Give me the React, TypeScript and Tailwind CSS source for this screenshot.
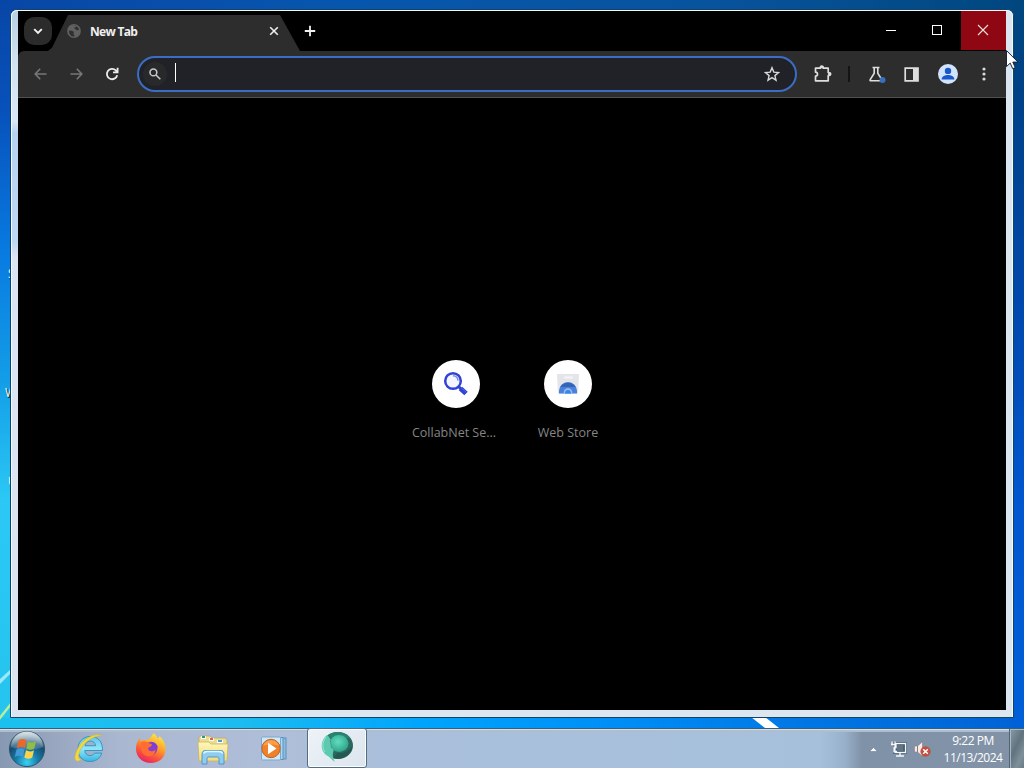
import React from "react";

function TabStrip() {
  return (
    <div className="flex h-10 items-start bg-black">
      <div className="ml-[6px] mt-[6px] flex h-7 w-7 items-center justify-center rounded-[10px] bg-[#2b2b2b]">
        <svg width="10" height="7" viewBox="0 0 10 7" fill="none" stroke="#f2f2f2" strokeWidth="1.9">
          <path d="M1.2 1.2 5 5l3.800-3.800" />
        </svg>
      </div>
      <div className="-ml-1 mt-1 flex h-9 w-[252px] items-center bg-[#2d2d2d] pl-[19px] pr-[21px] [clip-path:polygon(0_100%,4px_91%,20px_0,232px_0,252px_100%)]">
        <svg width="14" height="14" viewBox="0 0 14 14" className="-mt-1">
          <circle cx="7" cy="7" r="6.900" fill="#606060" />
          <path d="M2 6.500c2.300.3 3.700.2 4.600 1.200.8.900-.7 1.800.1 2.700.6.800 1.100 1.500.8 2.200C4.500 12.800 1.600 10.500 2 6.500ZM6 1.500c1.500-.4 3 0 3.300 1-.1 1-1.900.4-2 1.500.1.900 1.300.9 1.900 1.700.7.800 1.800.5 2.700.4C12 4 10 1.400 6 1.500Z" fill="#303030" />
        </svg>
        <span className="-mt-[3px] ml-[9px] flex-1 whitespace-nowrap text-[12px] font-bold tracking-[-0.7px] text-[#f0f0f0]">New Tab</span>
        <svg width="10" height="10" viewBox="0 0 10 10" fill="none" stroke="#eeeeee" strokeWidth="1.600" className="-mt-1">
          <path d="m1.200 1.200 7.600 7.600m0-7.600L1.200 8.800" />
        </svg>
      </div>
      <svg width="12" height="12" viewBox="0 0 12 12" fill="none" stroke="#f0f0f0" strokeWidth="1.800" className="ml-[4px] mt-[14px]">
        <path d="M6 .8v10.400M.8 6h10.400" />
      </svg>
      <div className="ml-auto flex h-full w-[138px]">
        <div className="flex flex-1 items-start justify-center pt-[19px]">
          <span className="h-px w-[10px] bg-white" />
        </div>
        <div className="flex flex-1 items-start justify-center pr-px pt-[14px]">
          <span className="h-[10px] w-[10px] border border-white" />
        </div>
        <div className="flex h-[39px] w-[45px] items-start justify-center bg-[#8f0712] pr-px pt-[13px]">
          <svg width="12" height="12" viewBox="0 0 12 12" fill="none" stroke="#f4dfe1" strokeWidth="1.100">
            <path d="m1 1 10 10M11 1 1 11" />
          </svg>
        </div>
      </div>
    </div>
  );
}

function Toolbar() {
  return (
    <div className="flex h-[47px] items-start rounded-tl-[6px] border-b border-[#505050] bg-[#2d2d2d] pt-[5px]">
      <div className="flex h-9 w-[119px] shrink-0 items-center pl-4">
        <svg width="13" height="12" viewBox="0 0 13 12" fill="none" stroke="#777777" strokeWidth="1.600">
          <path d="M12.500 6H1.300M6.200.8 1.200 6l5 5.200" />
        </svg>
        <svg width="13" height="12" viewBox="0 0 13 12" fill="none" stroke="#777777" strokeWidth="1.600" className="ml-[23px]">
          <path d="M.5 6h11.200M6.800.8l5 5.200-5 5.200" />
        </svg>
        <svg width="14" height="14" viewBox="0 0 14 14" fill="none" stroke="#ededed" strokeWidth="1.800" className="ml-[22px]">
          <path d="M12.200 8.200a5.200 5.200 0 1 1-1.400-4.900L12.400 5M12.600.8v4.600H8" />
        </svg>
      </div>
      <div className="flex h-9 w-[660px] shrink-0 items-center rounded-full border-2 border-[#3c6cc4] bg-[#202227] pr-[15px]">
        <div className="ml-1 flex h-6 w-6 items-center justify-center rounded-full bg-[#28292b]">
          <svg width="12" height="12" viewBox="0 0 12 12" fill="none" stroke="#c8c8c8" strokeWidth="1.600">
            <circle cx="4.400" cy="4.400" r="3.400" />
            <path d="m7 7 4.300 4.300" />
          </svg>
        </div>
        <div className="-mt-[3px] ml-[8px] h-[19px] w-px bg-white" />
        <svg width="16" height="16" viewBox="0 0 16 16" fill="none" stroke="#d8d8d8" strokeWidth="1.400" className="ml-auto">
          <path d="m8 1.700 1.800 4.400 4.700.4-3.600 3.100 1.100 4.600L8 11.700l-4 2.500 1.100-4.600-3.600-3.100 4.700-.4Z" />
        </svg>
      </div>
      <div className="flex h-9 flex-1 items-center pl-[17px]">
        <svg width="18" height="18" viewBox="0 0 18 18">
          <path d="M1.500 3.200h4.800c0-1.500.7-2 1.500-2s1.500.5 1.500 2h4.900v4.300c1.600 0 2.400.7 2.400 1.500s-.8 1.500-2.400 1.500v5.300H1.500v-4.600c1.500-.1 2-.9 2-2s-.5-1.900-2-2Z" fill="none" stroke="#dedede" strokeWidth="1.700" strokeLinejoin="round" />
          <path d="M6.200 3.300c0-1.500.6-2.300 1.600-2.300s1.600.8 1.600 2.300Zm7.900 4.100c1.700 0 2.500.7 2.500 1.600s-.8 1.600-2.500 1.600Z" fill="#dedede" />
        </svg>
        <div className="ml-[16px] h-4 w-[2px] bg-[#141414]" />
        <svg width="18" height="17" viewBox="0 0 18 17" className="ml-[18px]">
          <path d="M4.500 1.500h7M6.200 1.500v5.700l-4 6.400c-.4.700 0 1.200.7 1.200h10.200c.7 0 1.100-.5.700-1.200l-4-6.400V1.500" fill="none" stroke="#dedede" strokeWidth="1.600" />
          <circle cx="14.500" cy="14" r="3" fill="#3771bd" />
        </svg>
        <svg width="15" height="15" viewBox="0 0 15 15" className="ml-[18px]">
          <path d="M1.200 1.200h12.800v12.600H1.200Z" fill="none" stroke="#dedede" strokeWidth="1.700" />
          <path d="M9 1h5v13H9Z" fill="#dedede" />
        </svg>
        <svg width="20" height="20" viewBox="0 0 20 20" className="ml-[19px]">
          <circle cx="10" cy="10" r="10" fill="#d2e3fc" />
          <circle cx="10" cy="6.900" r="3.200" fill="#1959c9" />
          <path d="M3.700 15c0-2.700 3.700-4 6.300-4s6.300 1.300 6.300 4v.5H3.700Z" fill="#1959c9" />
        </svg>
        <svg width="4" height="14" viewBox="0 0 4 14" fill="#d8d8d8" className="ml-6">
          <circle cx="2" cy="2" r="1.600" />
          <circle cx="2" cy="7" r="1.600" />
          <circle cx="2" cy="12" r="1.600" />
        </svg>
      </div>
    </div>
  );
}

function Shortcut({ label, children }: { label: string; children: React.ReactNode }) {
  return (
    <div className="flex w-28 flex-col items-center">
      <div className="flex h-12 w-12 items-center justify-center rounded-full bg-white">{children}</div>
      <div className="mt-[15px] whitespace-nowrap text-[12.500px] leading-5 text-[#858585]">{label}</div>
    </div>
  );
}

function NewTabPage() {
  return (
    <div className="flex flex-1 justify-center bg-black pt-[262px]">
      <Shortcut label={<span className="mr-1">CollabNet Se...</span> as unknown as string}>
        <svg width="26" height="26" viewBox="0 0 26 26">
          <circle cx="10" cy="10" r="7.800" fill="#f4f6ff" stroke="#3142d6" strokeWidth="2.500" />
          <path d="M10 4.800c3 .1 4.800 2 5 4.800" fill="none" stroke="#7e8be8" strokeWidth="1.500" />
          <path d="m15.500 15.500 2.500 2.500" stroke="#3142d6" strokeWidth="3" />
          <path d="m17.500 17.500 5.500 5" stroke="#3142d6" strokeWidth="5" />
          <path d="m18 16.500 5 4.500" stroke="#5363e4" strokeWidth="1" />
        </svg>
      </Shortcut>
      <Shortcut label="Web Store">
        <svg width="22" height="22" viewBox="0 0 22 22">
          <path d="M0 1h22l-1 19.500H1Z" fill="#e3e5e8" />
          <rect x="7" y="3.500" width="9" height="2" rx="1" fill="#f5f6f8" />
          <path d="M2 20.500v-3a9 8.300 0 0 1 18 0v3Z" fill="#4a7fdc" />
          <path d="M3.500 14c3-6 12-6 15 0Z" fill="#3563b5" />
          <path d="M6.500 20.500a4.500 5.500 0 0 1 9 0Z" fill="#8fbcf0" />
          <path d="M8 20.500a3 3.500 0 0 1 6 0Z" fill="#3785e8" />
        </svg>
      </Shortcut>
    </div>
  );
}

function BrowserWindow() {
  return (
    <div className="flex h-[709px] w-[1004px] flex-col rounded-t-[7px] border border-[#104568] bg-[#dbe6f0]">
      <div className="flex flex-1 flex-col rounded-t-[6px] border border-b-0 border-[#f2f8fc] bg-[linear-gradient(180deg,#b8d0e4_0px,#d4e3f1_55px,#dce7f6_110px,#b8d2f1_122px,#bed7f2_230px,#dce3f2_246px,#dce3f0_100%)] bg-[length:7px_100%] bg-no-repeat pb-[7px] pl-[6px] pr-[6px]">
        <div className="flex flex-1 flex-col bg-black">
          <TabStrip />
          <Toolbar />
          <NewTabPage />
        </div>
      </div>
    </div>
  );
}

function StartOrb() {
  return (
    <svg width="38" height="38" viewBox="0 0 38 38">
      <defs>
        <radialGradient id="orb" cx="50%" cy="88%" r="80%">
          <stop offset="0" stopColor="#39d3f5" />
          <stop offset=".4" stopColor="#167ba8" />
          <stop offset=".75" stopColor="#164b70" />
          <stop offset="1" stopColor="#668b9c" />
        </radialGradient>
        <linearGradient id="shine" x2="0" y2="1">
          <stop stopColor="#fff" stopOpacity=".75" />
          <stop offset="1" stopColor="#fff" stopOpacity=".1" />
        </linearGradient>
      </defs>
      <circle cx="19" cy="19" r="17.600" fill="url(#orb)" stroke="#31566a" />
      <path d="M3 17a16 15.500 0 0 1 32 0c-8 4-22 4-32 0Z" fill="url(#shine)" />
      <path d="M10.500 10.500c3-2 5.500-1.800 8 0l-1.600 7.500c-2.500-1.500-5-1.500-8 0Z" fill="#e9682b" />
      <path d="M20 11.400c3 1.700 5.500 1.500 8-.2l-1.700 7.300c-2.500 1.600-5.200 1.700-8 .1Z" fill="#91bd45" />
      <path d="M8.500 19.500c3-1.600 5.500-1.500 8 0l-1.700 7.400c-2.500-1.600-5-1.500-8 0Z" fill="#4398d6" />
      <path d="M18 20.300c3 1.500 5.300 1.500 8-.1l-1.700 7.300c-2.500 1.700-5.300 1.500-8 0Z" fill="#ffd349" />
    </svg>
  );
}

function ExplorerE() {
  return (
    <svg width="32" height="32" viewBox="0 0 32 32">
      <defs>
        <linearGradient id="ie" x2="0" y2="1">
          <stop stopColor="#62c4e8" />
          <stop offset=".5" stopColor="#8ee6fa" />
          <stop offset="1" stopColor="#38b4e0" />
        </linearGradient>
      </defs>
      <path d="M29.500 18.500H11.800c.2 3.500 2.200 5 5.200 5 2.200 0 3.600-.8 4.500-2.400h7.300C27 26.800 22.500 29.500 16.800 29.500 9.500 29.500 5 24.500 5 17.300S9.800 4.500 17 4.500c8.200 0 12.700 5 12.500 14ZM12 13.700h10.600c-.3-3-2.200-4.500-5.200-4.500s-5 1.600-5.400 4.500Z" fill="url(#ie)" stroke="#2e91bd" strokeWidth=".9" />
      <path d="M29 3.400C21 1 11 6.400 6 14.600 2.800 19.800.700 26 3 28.500c1.500 1.300 3.500.2 5.500-1-4-.2-3.600-5.400-.5-11C12.500 9 20 4.200 29 3.400Z" fill="#f5d83c" stroke="#d0b83c" strokeWidth=".6" />
    </svg>
  );
}

function FirefoxIcon() {
  return (
    <svg width="32" height="32" viewBox="0 0 32 32">
      <defs>
        <linearGradient id="fox" x1=".8" y1="0" x2=".3" y2="1">
          <stop stopColor="#fff04c" />
          <stop offset=".4" stopColor="#ffa529" />
          <stop offset=".7" stopColor="#fa593a" />
          <stop offset="1" stopColor="#e62163" />
        </linearGradient>
      </defs>
      <path d="M18.500 1c2 1.500 3.300 3.200 4 5.500 1-.2 1.700-1.200 2-2.300 4 3.500 6.500 8 6 13.800C30 26 24 31 16 31 7.500 31 1 25 1 17c0-4.800 1.500-8.400 3.800-11l1 3.300c1.800-1.400 3.400-1.500 5.200-1.200 3.500-.5 5.500-3.600 7.500-7.100Z" fill="url(#fox)" />
      <circle cx="15.800" cy="16.500" r="6.600" fill="#8a3fcb" />
      <path d="M6 10.200c3-1.300 6.200-.7 8.400 1.300 2 .2 2.800.7 2.500 1.800-1 1.900-3.500 1.400-3.800 3.500.7 3.300 5 3 7.400 1-.4 4.800-3.600 6.400-6.700 6.400-5 0-9.300-5-7.800-14Z" fill="#ff6d32" />
      <path d="M15 9.800c4-.4 7.500 2.500 8 6.200-2-1.800-3.600-2-5.500-1.800 1-1.400 0-3-2.500-4.400Z" fill="#6f42df" />
    </svg>
  );
}

function FolderIcon() {
  return (
    <svg width="34" height="32" viewBox="0 0 34 32">
      <defs>
        <linearGradient id="folder" x2="0" y2="1">
          <stop stopColor="#fff7ba" />
          <stop offset="1" stopColor="#f0dc78" />
        </linearGradient>
      </defs>
      <path d="M3 8V3l2-1h9l2 2h13l2 2v18H3Z" fill="#ecdc8b" stroke="#bda865" strokeWidth=".7" />
      <path d="M5 2h5v3H5zm8 2h5v3h-5zm8 2h6v3h-6z" fill="#f8fcff" />
      <path d="M6 2h3v2H6z" fill="#2e9a72" />
      <path d="M14 4h3v2h-3z" fill="#d76848" />
      <path d="M22 6h4v2h-4z" fill="#4c9ed2" />
      <path d="M2 8h11l2 2h17l-1 17H3Z" fill="url(#folder)" stroke="#c8b667" strokeWidth=".8" />
      <path d="M6 30v-9.500c0-3 1.500-4 3.500-4h15c2.500 0 3.500 1.500 3.500 4V30h-5v-5c0-1.500-.5-2-2-2h-8c-1.500 0-2 .5-2 2v5Z" fill="#8fcdf0" stroke="#4a8fcc" strokeWidth=".9" />
      <path d="M7.500 19.500c1-1.800 2-2 3.500-2h12c2 0 3 .5 3.800 2" fill="none" stroke="#e1faff" strokeWidth="1.300" />
    </svg>
  );
}

function MediaIcon() {
  return (
    <svg width="28" height="26" viewBox="0 0 28 26">
      <rect x="10" y="2" width="16" height="21" fill="#8bbbe0" stroke="#5f91b9" />
      <rect x="7" y="1.500" width="16" height="22" fill="#afd5ef" stroke="#5b93c0" />
      <rect x="1.500" y="1" width="19" height="23" rx="1" fill="#d0e7f4" stroke="#77abd1" />
      <circle cx="11" cy="12.500" r="9.200" fill="#ee812a" stroke="#c46228" />
      <path d="M3 10a8.500 8.500 0 0 1 16 0c-4-2-10-2-16 0Z" fill="#ffad5b" opacity=".7" />
      <path d="m8 6.800 8.500 5.700L8 18.200Z" fill="#fff" />
    </svg>
  );
}

function GreenGlobe() {
  return (
    <svg width="34" height="32" viewBox="0 0 34 32">
      <defs>
        <radialGradient id="green" cx="45%" cy="40%" r="60%">
          <stop stopColor="#62dcc0" />
          <stop offset="1" stopColor="#2fa588" />
        </radialGradient>
      </defs>
      <ellipse cx="18" cy="14.500" rx="15" ry="13.500" fill="#2c6860" />
      <path d="M6 6C11-.5 25-1.200 31 8c-6-2-10-2.500-14-.5Z" fill="#2a8270" />
      <path d="M13 27c9 2.500 18-2 19.500-12-4 5-9 8-15 7Z" fill="#24594f" />
      <ellipse cx="19" cy="12.500" rx="9.500" ry="8.500" fill="url(#green)" />
      <path d="M7 4C-.5 10 0 21 8 25c2.500 2 4 4 7 6-2-4-2.500-6-2-9 1-2 .5-3-.5-4.500C11.500 14 12.500 12 11 9 10 7 9 6 7 4Z" fill="#5cc9b0" />
      <path d="M6 6C2 11 2 17 5 21" stroke="#98e6d3" fill="none" />
      <path d="M10 9c1.500 3 .5 5 2 8.500" stroke="#379c85" fill="none" />
    </svg>
  );
}

function SystemTray() {
  return (
    <div className="ml-auto flex h-full items-center">
      <svg width="9" height="5" viewBox="0 0 9 5" className="mt-px">
        <path d="M.5 4.500 4.500.500l4 4Z" fill="#f6faff" stroke="#5e7184" strokeWidth=".5" />
      </svg>
      <svg width="17" height="16" viewBox="0 0 17 16" className="ml-[12px]">
        <path d="M5 2.500h10v9H5Z" fill="#617486" stroke="#3a4e60" strokeWidth="3" />
        <path d="M5 2.500h10.500v9H5ZM10 12v3m-4 0h8M2 .500v3m3-3v3M1 3.500h5v3H4v4h3" fill="none" stroke="#f4f8fc" strokeWidth="1.300" />
      </svg>
      <svg width="17" height="16" viewBox="0 0 17 16" className="ml-[7px]">
        <path d="M.5 5h3L8.500.700v14.600L3.500 11h-3Z" fill="#f7e9e8" stroke="#8c7880" strokeWidth=".6" />
        <path d="M3.500 5v6" stroke="#857e88" />
        <circle cx="11.500" cy="10.500" r="4.800" fill="#c94e3c" stroke="#a94c44" strokeWidth=".5" />
        <path d="m9.200 8.200 4.600 4.600m0-4.600-4.600 4.600" stroke="#fff" strokeWidth="1.500" />
      </svg>
      <div className="ml-2 flex w-[68px] flex-col items-center whitespace-nowrap text-[12px] leading-[17px] tracking-[-0.480px] text-white">
        <span>9:22 PM</span>
        <span>11/13/2024</span>
      </div>
      <div className="ml-[2px] h-full w-[15px] border-l border-[#526575] bg-[linear-gradient(115deg,#8a9ba7_0%,#60737e_45%,#7d919b_75%,#687a85_100%)] shadow-[inset_1px_1px_0_#a8b7c4]" />
    </div>
  );
}

function Taskbar() {
  return (
    <div className="flex h-10 shrink-0 items-center border-t border-[#31617c] bg-[linear-gradient(90deg,#8799b2_0px,#97a5bf_50px,#aab7d1_120px,#afbed9_280px,#a9bfdb_400px,#a6c0dc_820px,#98b0ca_845px,#8092a7_862px,#8293a8_1024px)] shadow-[inset_0_1px_0_#d3e0ec,inset_0_3px_0_#afbdcd]">
      <div className="ml-2"><StartOrb /></div>
      <div className="-mt-[2px] ml-[27px]"><ExplorerE /></div>
      <div className="-mt-[2px] ml-[30px]"><FirefoxIcon /></div>
      <div className="mt-[3px] ml-[29px]"><FolderIcon /></div>
      <div className="ml-[30px]"><MediaIcon /></div>
      <div className="-mt-px ml-[19px] flex h-[40px] w-[60px] items-center justify-center rounded-[3px] border border-[#546d83] bg-[linear-gradient(135deg,#edf3f8,#dce4ed)] pb-[2px] shadow-[inset_0_0_0_1px_#fbfdff]">
        <GreenGlobe />
      </div>
      <SystemTray />
    </div>
  );
}

export default function App() {
  return (
    <div className="relative flex h-[768px] w-[1024px] flex-col overflow-hidden font-['Open_Sans','Noto_Sans',sans-serif]">
      <div
        className="relative h-[728px] overflow-hidden bg-no-repeat pl-[10px] pt-[9px] [background-image:linear-gradient(180deg,#0846a6_0px,#0851bb_110px,#087ae0_250px,#139de7_380px,#2bc8f5_500px,#24c4ee_728px),linear-gradient(180deg,#00477f_0px,#004186_90px,#0048ad_300px,#0056cf_500px,#0060d8_728px),linear-gradient(90deg,#0846a6,#0756ae_340px,#08539e_700px,#00477f),linear-gradient(90deg,#1cc0ee_0px,#1cbcf0_240px,#00a3fc_430px,#008df6_620px,#0077e4_800px,#0062d4_1024px)] [background-position:0_0,100%_0,0_0,0_100%] [background-size:11px_718px,12px_728px,100%_20px,100%_20px]"
      >
        <svg className="absolute left-0 top-[660px]" width="11" height="68" viewBox="0 0 11 68">
          <path d="m-1 20 13-12v4L-1 25Z" fill="#b9efff" opacity=".8" />
          <path d="M-1 57 11 42v4L-1 61Z" fill="#b6ef9b" />
        </svg>
        <svg className="absolute left-[751px] top-[717px]" width="30" height="11" viewBox="0 0 30 11">
          <path d="M0 0h14l14 11H14Z" fill="#fff" />
        </svg>
        <span className="absolute left-[8px] top-[266px] text-[12px] leading-4 text-white [text-shadow:1px_1px_1px_#000]">S</span>
        <span className="absolute left-[5px] top-[385px] text-[12px] leading-4 text-white [text-shadow:1px_1px_1px_#000]">W</span>
        <span className="absolute left-[8px] top-[474px] text-[12px] leading-4 text-white [text-shadow:1px_1px_1px_#000]">U</span>
        <div className="relative">
          <BrowserWindow />
        </div>
      </div>
      <Taskbar />
      <svg className="absolute left-[1006px] top-[50px]" width="13" height="20" viewBox="0 0 13 20">
        <path d="M.5.600v16l3.700-3.500 2.500 5.600 2.600-1.100-2.500-5.500H12Z" fill="#fff" stroke="#182333" strokeWidth="1" />
      </svg>
    </div>
  );
}
